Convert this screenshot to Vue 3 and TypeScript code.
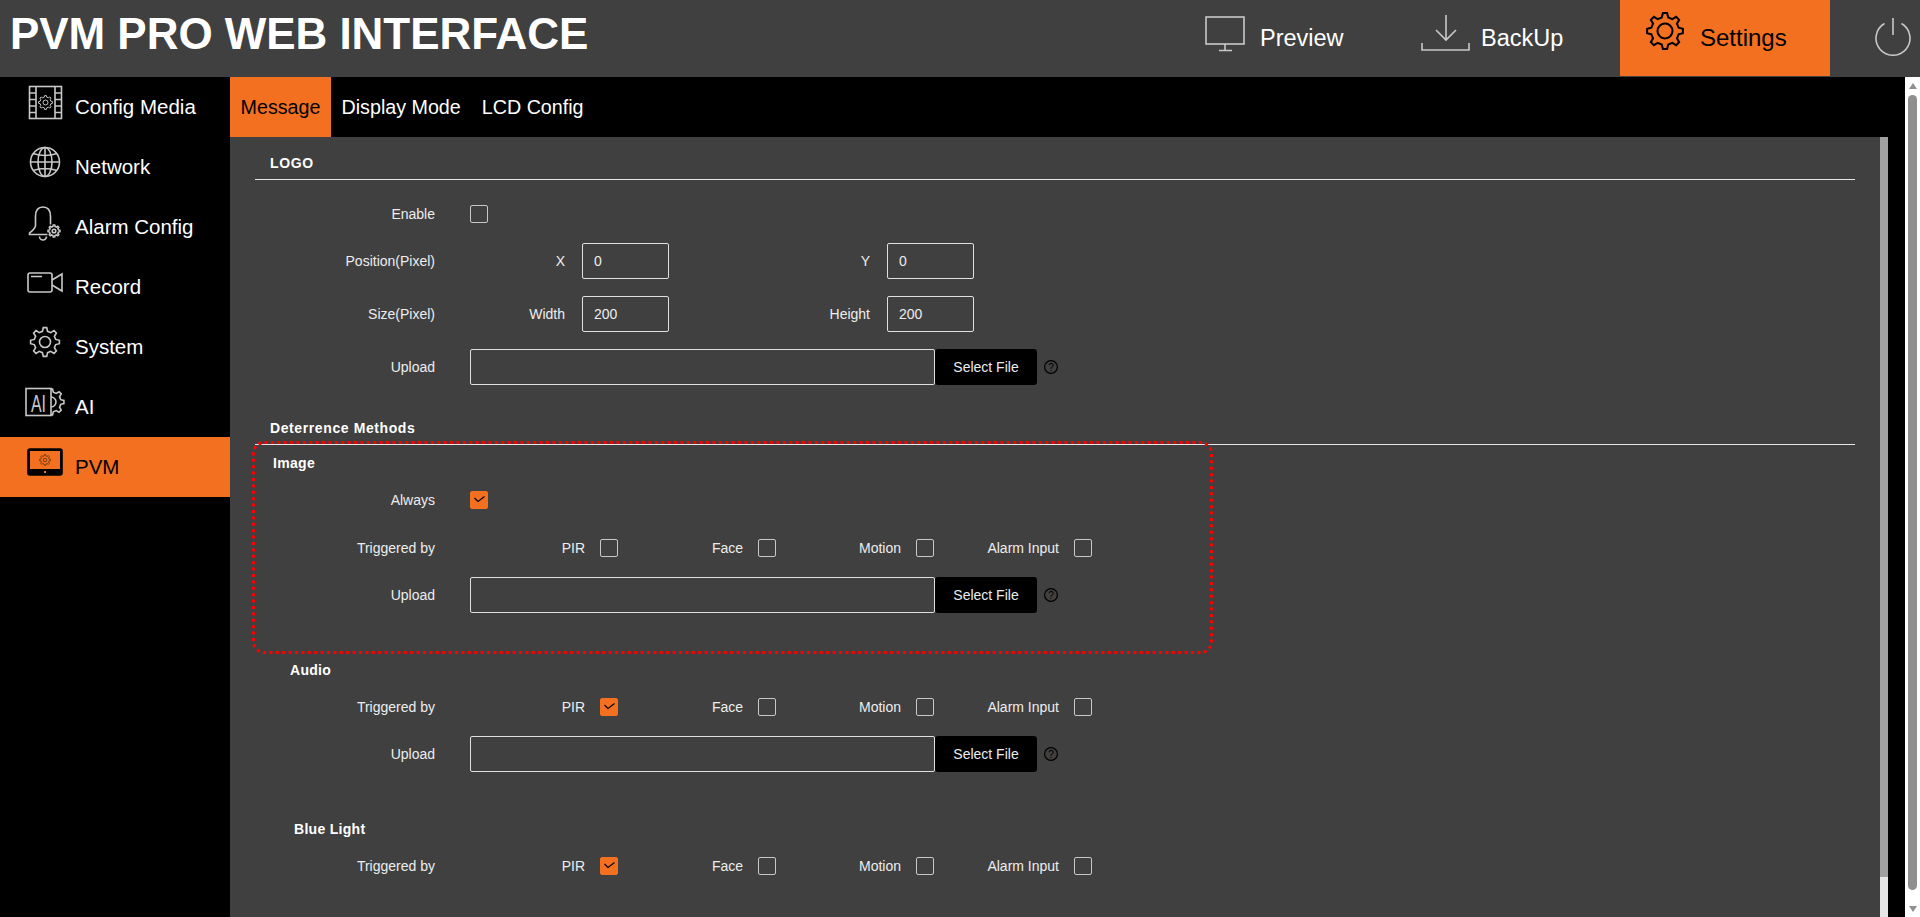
<script setup lang="ts">
interface TriggerSet {
  title: string;
  titleClass: string;
  checked: string[];
  upload: boolean;
}

const sideItems = [
  { id: 'media', label: 'Config Media' },
  { id: 'network', label: 'Network' },
  { id: 'alarm', label: 'Alarm Config' },
  { id: 'record', label: 'Record' },
  { id: 'system', label: 'System' },
  { id: 'ai', label: 'AI' },
  { id: 'pvm', label: 'PVM' },
];

const tabs = ['Message', 'Display Mode', 'LCD Config'];
const triggers = ['PIR', 'Face', 'Motion', 'Alarm Input'];

const sets: TriggerSet[] = [
  { title: 'Audio', titleClass: 'audio', checked: ['PIR'], upload: true },
  { title: 'Blue Light', titleClass: 'blue', checked: ['PIR'], upload: false },
];

// builds a toothed gear outline, centred on cx/cy
function gear(cx: number, cy: number, outer: number, root: number, teeth = 8): string {
  const step = (Math.PI * 2) / teeth;
  const pts: string[] = [];
  const at = (a: number, r: number) =>
    `${(cx + Math.cos(a) * r).toFixed(2)} ${(cy + Math.sin(a) * r).toFixed(2)}`;
  for (let i = 0; i < teeth; i++) {
    const a = i * step - Math.PI / 2;
    pts.push(at(a - step * 0.3, root), at(a - step * 0.15, outer), at(a + step * 0.15, outer), at(a + step * 0.3, root));
  }
  return `M${pts.join('L')}Z`;
}
</script>

<template>
  <div class="page">
    <header class="topbar">
      <h1 class="brand">PVM PRO WEB INTERFACE</h1>
      <nav class="topnav">
        <a class="topitem preview">
          <svg width="40" height="36" viewBox="0 0 40 36" class="ico">
            <rect x="1" y="1" width="38" height="27" />
            <path d="M20 28v6M14 34.500h13" />
          </svg>
          <span>Preview</span>
        </a>
        <a class="topitem backup">
          <svg width="49" height="36" viewBox="0 0 49 36" class="ico">
            <path d="M25 0v25M15 15l10 10 10-10" />
            <path d="M1 28v7h47v-7" />
          </svg>
          <span>BackUp</span>
        </a>
        <a class="topitem settings">
          <svg width="38" height="38" viewBox="0 0 38 38" class="ico dark">
            <path :d="gear(19, 19, 18, 14)" />
            <circle cx="19" cy="19" r="7.500" />
          </svg>
          <span>Settings</span>
        </a>
        <a class="power">
          <svg width="38" height="38" viewBox="0 0 38 38" class="ico">
            <path d="M10.500 5.500a17 17 0 1 0 17 0" />
            <path d="M19 0v17" />
          </svg>
        </a>
      </nav>
    </header>

    <div class="body">
      <aside class="sidebar">
        <div v-for="item in sideItems" :key="item.id" :class="['side-item', { active: item.id === 'pvm' }]">
          <svg class="side-ico ico" width="75" height="60" viewBox="0 0 75 60">
            <template v-if="item.id === 'media'">
              <rect x="29.500" y="9.500" width="32" height="32" />
              <path d="M36 9.500v32M55 9.500v32M29.500 16h6.500M29.500 22.500h6.500M29.500 29h6.500M29.500 35.500h6.500M55 16h6.500M55 22.500h6.500M55 29h6.500M55 35.500h6.500" />
              <path class="thin" :d="gear(45.500, 25.500, 7, 5.500)" />
              <circle class="thin" cx="45.500" cy="25.500" r="2.500" />
            </template>
            <template v-else-if="item.id === 'network'">
              <circle cx="45" cy="25" r="14.500" />
              <ellipse cx="45" cy="25" rx="7" ry="14.500" />
              <path d="M45 10.500v29M30.500 25h29M33 16.500q12 4 24 0M33 33.500q12-4 24 0" />
            </template>
            <template v-else-if="item.id === 'alarm'">
              <path d="M43 10c-5 0-7.500 4-7.500 9.500v9c0 3-3 5-6 7.500v1.500h18M43 10c5 0 7.500 4 7.500 9.500v8" />
              <path d="M39.500 39.500a3.500 3.500 0 0 0 7 0" />
              <path :d="gear(54, 34, 6, 4.600)" />
              <circle cx="54" cy="34" r="1.800" />
            </template>
            <template v-else-if="item.id === 'record'">
              <rect x="28" y="16" width="24" height="19" rx="2" />
              <path d="M52 23l10-6v17l-10-6M31 19.500h11" />
            </template>
            <template v-else-if="item.id === 'system'">
              <path :d="gear(45, 25, 14.500, 11)" />
              <circle cx="45" cy="25" r="5.500" />
            </template>
            <template v-else-if="item.id === 'ai'">
              <path :d="gear(51, 25, 13, 10)" />
              <circle cx="51" cy="25" r="5" />
              <rect class="blackout" x="26" y="11.500" width="25" height="27" />
              <text x="31" y="35" class="ai-mark" textLength="15" lengthAdjust="spacingAndGlyphs">AI</text>
            </template>
            <template v-else>
              <rect class="device" x="28" y="12" width="34" height="26" rx="2" />
              <rect class="screen" x="30" y="14" width="30" height="18" />
              <path class="gear-dark" :d="gear(45, 23, 5.500, 4.200)" />
              <circle class="gear-dark" cx="45" cy="23" r="1.800" />
              <rect class="screen" x="44" y="34" width="2" height="2" />
            </template>
          </svg>
          <span>{{ item.label }}</span>
        </div>
      </aside>

      <main class="workspace">
        <div class="tabs">
          <button v-for="tab in tabs" :key="tab" :class="['tab', { active: tab === 'Message' }]">{{ tab }}</button>
        </div>
        <div class="work-row">
          <section class="panel">
            <h2 class="section-title">LOGO</h2>
            <div class="row first check-row">
              <label class="row-label">Enable</label>
              <span class="check"></span>
            </div>
            <div class="row">
              <label class="row-label">Position(Pixel)</label>
              <div class="pair narrow"><label>X</label><input class="num" readonly value="0" /></div>
              <div class="pair wide"><label>Y</label><input class="num" readonly value="0" /></div>
            </div>
            <div class="row">
              <label class="row-label">Size(Pixel)</label>
              <div class="pair narrow"><label>Width</label><input class="num" readonly value="200" /></div>
              <div class="pair wide"><label>Height</label><input class="num" readonly value="200" /></div>
            </div>
            <div class="row">
              <label class="row-label">Upload</label>
              <input class="file" readonly />
              <button class="select">Select File</button>
              <svg class="help" width="14" height="14" viewBox="0 0 14 14">
                <circle cx="7" cy="7" r="6.400" />
                <text x="7" y="10.500">?</text>
              </svg>
            </div>

            <h2 class="section-title next">Deterrence Methods</h2>

            <div class="image-group">
              <svg class="highlight" width="961" height="213" viewBox="0 0 961 213">
                <rect x="1.500" y="1.500" width="958" height="210" rx="11" />
              </svg>
              <h3 class="group-title image">Image</h3>
              <div class="row group-first check-row always">
                <label class="row-label">Always</label>
                <span class="check on">
                  <svg width="16" height="16" viewBox="0 0 16 16"><path d="M3.500 6l3.500 3.500 6.500-5" /></svg>
                </span>
              </div>
              <div class="row check-row">
                <label class="row-label">Triggered by</label>
                <div class="trigger-grid">
                  <div v-for="t in triggers" :key="t" class="trigger">
                    <label>{{ t }}</label><span class="check"></span>
                  </div>
                </div>
              </div>
              <div class="row">
                <label class="row-label">Upload</label>
                <input class="file" readonly />
                <button class="select">Select File</button>
                <svg class="help" width="14" height="14" viewBox="0 0 14 14">
                  <circle cx="7" cy="7" r="6.400" />
                  <text x="7" y="10.500">?</text>
                </svg>
              </div>
            </div>

            <div v-for="set in sets" :key="set.title">
              <h3 :class="['group-title', set.titleClass]">{{ set.title }}</h3>
              <div class="row group-first check-row">
                <label class="row-label">Triggered by</label>
                <div class="trigger-grid">
                  <div v-for="t in triggers" :key="t" class="trigger">
                    <label>{{ t }}</label>
                    <span :class="['check', { on: set.checked.includes(t) }]">
                      <svg v-if="set.checked.includes(t)" width="16" height="16" viewBox="0 0 16 16"><path d="M3.500 6l3.500 3.500 6.500-5" /></svg>
                    </span>
                  </div>
                </div>
              </div>
              <div v-if="set.upload" class="row">
                <label class="row-label">Upload</label>
                <input class="file" readonly />
                <button class="select">Select File</button>
                <svg class="help" width="14" height="14" viewBox="0 0 14 14">
                  <circle cx="7" cy="7" r="6.400" />
                  <text x="7" y="10.500">?</text>
                </svg>
              </div>
            </div>
          </section>
          <div class="inner-scroll"><div class="inner-thumb"></div></div>
        </div>
      </main>

      <div class="page-scroll">
        <span class="arrow up"></span>
        <div class="page-thumb"></div>
        <span class="arrow down"></span>
      </div>
    </div>
  </div>
</template>

<style scoped>
.page {
  width: 1920px;
  height: 917px;
  overflow: hidden;
  display: flex;
  flex-direction: column;
  background: #000;
  color: #fff;
  font-family: "Liberation Sans", Arial, sans-serif;
}

.topbar {
  flex: 0 0 77px;
  display: flex;
  background: #404040;
}

.brand {
  margin: 0;
  padding: 9px 0 0 10px;
  font-size: 44px;
  line-height: 50px;
  font-weight: 700;
  letter-spacing: -0.050px;
  color: #fff;
  white-space: nowrap;
}

.topnav {
  margin-left: auto;
  display: flex;
  align-items: flex-start;
}

.topitem {
  height: 76px;
  display: flex;
  align-items: center;
  font-size: 23.500px;
  box-sizing: border-box;
}

.topitem svg {
  flex: none;
}

.preview {
  width: 215px;
  gap: 15px;
}

.preview svg {
  margin-top: -8px;
}

.backup {
  width: 200px;
  gap: 11px;
  padding-left: 1px;
}

.backup svg {
  margin-top: -10px;
}

.settings {
  width: 210px;
  padding-left: 26px;
  gap: 16px;
  background: #f37021;
  color: #000;
  font-size: 24px;
}

.settings svg {
  margin-top: -14px;
}

.power {
  width: 90px;
  padding: 18px 0 0 44px;
  box-sizing: border-box;
}

.ico {
  fill: none;
  stroke: #c8c8c8;
  stroke-width: 1.600;
}

.ico.dark {
  stroke: #000;
  stroke-width: 2;
}

.ico .thin {
  stroke-width: 1;
}

.body {
  flex: 1;
  min-height: 0;
  display: flex;
}

.sidebar {
  flex: 0 0 230px;
  background: #000;
}

.side-item {
  height: 60px;
  display: flex;
  align-items: center;
  font-size: 20.500px;
}

.side-item.active {
  background: #f37021;
  color: #000;
}

.side-ico {
  flex: 0 0 75px;
}

.ai-mark {
  font-size: 23px;
  fill: #c8c8c8;
  stroke: none;
  font-family: "Liberation Sans", Arial, sans-serif;
}

.blackout {
  fill: #000;
}

.device {
  fill: #000;
  stroke: #000;
}

.screen {
  fill: #f37021;
  stroke: none;
}

.gear-dark {
  fill: none;
  stroke: #7a3a10;
  stroke-width: 1;
}

.workspace {
  flex: 1;
  min-width: 0;
  display: flex;
  flex-direction: column;
  background: #000;
}

.tabs {
  flex: 0 0 60px;
  display: flex;
}

.tab {
  padding: 0 10.500px;
  border: none;
  background: transparent;
  color: #fff;
  font: inherit;
  font-size: 19.700px;
}

.tab.active {
  width: 101px;
  padding: 0;
  background: #f37021;
  color: #000;
}

.work-row {
  flex: 1;
  min-height: 0;
  display: flex;
}

.panel {
  flex: 0 0 1650px;
  box-sizing: border-box;
  padding: 0 25px;
  background: #404040;
  color: #ededed;
  overflow: hidden;
  font-size: 14px;
}

.section-title {
  margin: 0;
  padding: 17px 0 7px 15px;
  color: #fff;
  font-size: 14px;
  line-height: 18px;
  font-weight: 700;
  letter-spacing: 0.600px;
  border-bottom: 1px solid #e6e6e6;
}

.section-title.next {
  margin-top: 17px;
}

.row {
  display: flex;
  align-items: center;
  min-height: 36px;
  margin-top: 17px;
}

.row.first {
  margin-top: 22px;
}

.row.group-first {
  margin-top: 16px;
}

.check-row {
  min-height: 24px;
}

.check-row label {
  padding-bottom: 1px;
}

.always {
  margin-bottom: 24px;
}

.row-label {
  flex: 0 0 180px;
  margin-right: 35px;
  text-align: right;
}

.check {
  flex: none;
  width: 18px;
  height: 18px;
  box-sizing: border-box;
  border: 1px solid #c8c8c8;
  border-radius: 2px;
  display: flex;
  align-items: center;
  justify-content: center;
}

.check.on {
  background: #f37021;
  border-color: #f37021;
}

.check svg {
  fill: none;
  stroke: #000;
  stroke-width: 1.100;
}

.pair {
  display: flex;
  align-items: center;
  justify-content: flex-end;
  gap: 17px;
}

.pair.narrow {
  width: 199px;
}

.pair.wide {
  width: 305px;
}

.num,
.file {
  height: 36px;
  box-sizing: border-box;
  border: 1px solid #e0e0e0;
  border-radius: 2px;
  background: transparent;
  color: #ededed;
  font: inherit;
  outline: none;
}

.num {
  width: 87px;
  padding: 0 11px;
}

.file {
  width: 465px;
  padding: 0 10px;
}

.select {
  width: 102px;
  height: 36px;
  padding: 0;
  border: none;
  border-radius: 3px;
  background: #000;
  color: #ededed;
  font: inherit;
}

.help {
  margin-left: 7px;
  fill: none;
  stroke: #000;
  stroke-width: 1.200;
}

.help text {
  fill: #000;
  stroke: none;
  font-size: 10px;
  text-anchor: middle;
  font-family: "Liberation Sans", Arial, sans-serif;
}

.image-group {
  position: relative;
}

/* red annotation frame laid over the Image block */
.highlight {
  position: absolute;
  top: -4px;
  left: -3px;
  fill: none;
  stroke: #f00;
  stroke-width: 3;
  stroke-dasharray: 3 3.400;
  pointer-events: none;
}

.group-title {
  margin: 0;
  color: #fff;
  font-size: 14px;
  line-height: 18px;
  font-weight: 700;
  letter-spacing: 0.300px;
}

.group-title.image {
  padding: 9px 0 0 18px;
}

.group-title.audio {
  margin-top: 48px;
  padding-left: 35px;
}

.group-title.blue {
  margin-top: 48px;
  padding-left: 39px;
}

.trigger-grid {
  display: grid;
  grid-template-columns: 148px 158px 158px 158px;
}

.trigger {
  display: flex;
  align-items: center;
  justify-content: flex-end;
  gap: 15px;
}

.inner-scroll {
  flex: 0 0 8px;
  background: #e6e6e6;
}

.inner-thumb {
  height: 740px;
  background: #a0a0a0;
}

.page-scroll {
  flex: 0 0 15px;
  display: flex;
  flex-direction: column;
  align-items: center;
  background: #fff;
  padding-top: 6px;
  box-sizing: border-box;
}

.page-thumb {
  width: 9px;
  height: 795px;
  margin: 6px 0 16px;
  border-radius: 5px;
  background: #8f8f8f;
}

.arrow {
  width: 0;
  height: 0;
  border-left: 4.500px solid transparent;
  border-right: 4.500px solid transparent;
}

.arrow.up {
  border-bottom: 6px solid #8f8f8f;
}

.arrow.down {
  border-top: 6px solid #8f8f8f;
}
</style>

<style>
html,
body {
  margin: 0;
  overflow: hidden;
  background: #000;
}
</style>
